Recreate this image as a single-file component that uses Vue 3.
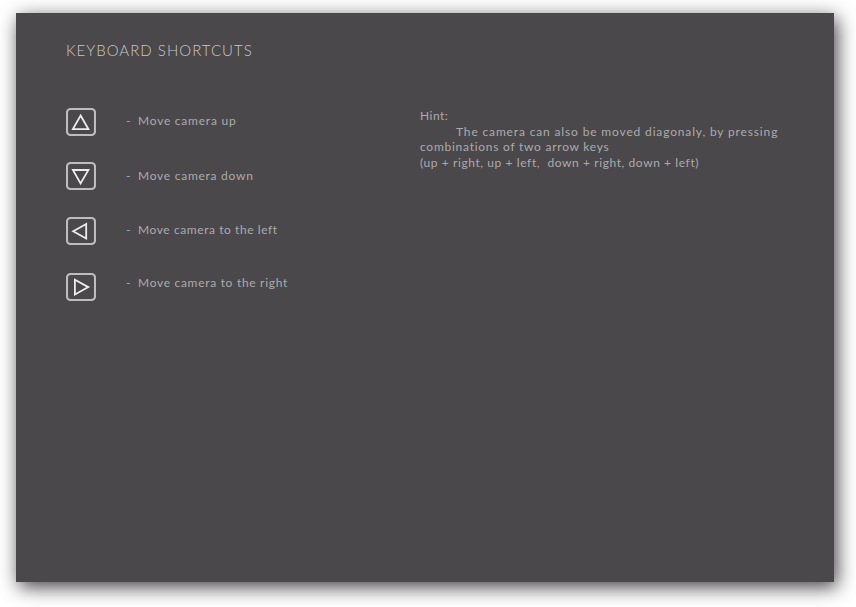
<script setup>
const shortcuts = [
  { id: 'up', label: 'Move camera up', points: '14.6,7.5 22.4,21.1 6.9,21.1' },
  { id: 'down', label: 'Move camera down', points: '14.6,21.4 22.4,8 6.9,8' },
  { id: 'left', label: 'Move camera to the left', points: '7.2,14.3 20.2,7 20.2,21.5' },
  { id: 'right', label: 'Move camera to the right', points: '22.3,14.1 8.9,6.7 8.9,21.5' },
]
</script>

<template>
  <div class="page">
    <main class="panel">
      <h1 class="title">KEYBOARD SHORTCUTS</h1>
      <div class="content">
        <ul class="shortcuts">
          <li v-for="s in shortcuts" :key="s.id" class="row" :class="s.id">
            <svg class="key" width="30" height="28" viewBox="0 0 30 28">
              <rect x="1" y="1" width="28" height="26" rx="3.5" fill="none" stroke="#bdbdbe" stroke-width="2.1" />
              <polygon :points="s.points" fill="none" stroke="#ececec" stroke-width="1.8" />
            </svg>
            <span class="dash">-</span>
            <span class="label">{{ s.label }}</span>
          </li>
        </ul>
        <section class="hint">
          <div class="l1">Hint:</div>
          <div class="l2">The camera can also be moved diagonaly, by pressing</div>
          <div class="l3">combinations of two arrow keys</div>
          <div class="l4">(up + right, up + left,&nbsp; down + right, down + left)</div>
        </section>
      </div>
    </main>
  </div>
</template>

<style>
body {
  background: #fff;
}
</style>

<style scoped>
.page {
  box-sizing: border-box;
  height: 607px;
  padding: 13px 0 0 16px;
  overflow: hidden;
}
.panel {
  box-sizing: border-box;
  width: 818px;
  height: 569px;
  padding: 27px 0 0 50px;
  background: #4a484a;
  box-shadow: 3px 5px 18px rgba(0, 0, 0, 0.75);
  color: #acabac;
  font-family: Lato, "Liberation Sans", sans-serif;
  font-size: 12px;
}
.title {
  margin: 0;
  height: 20px;
  color: #c8c7c8;
  font-size: 15px;
  font-weight: 300;
  line-height: 20px;
  letter-spacing: 1.02px;
  white-space: nowrap;
}
.content {
  display: flex;
  padding-top: 48px;
}
.shortcuts {
  width: 354px;
  margin: 0;
  padding: 0;
  list-style: none;
}
.row {
  display: flex;
  height: 28px;
  line-height: 26px;
  white-space: nowrap;
  letter-spacing: 0.77px;
}
.down {
  margin-top: 26px;
  line-height: 28px;
  letter-spacing: 0.74px;
}
.left {
  margin-top: 27px;
  letter-spacing: 0.58px;
}
.right {
  margin-top: 28px;
  line-height: 20px;
  letter-spacing: 0.7px;
}
.key { display: block; }
.dash {
  width: 12px;
  margin-left: 30px;
}
.hint {
  line-height: 15.6px;
  white-space: nowrap;
  letter-spacing: 0.8px;
}
.l1 { letter-spacing: 0.5px; }
.l2 {
  padding-left: 36px;
  letter-spacing: 0.85px;
}
.l3 { letter-spacing: 0.74px; }
.l4 { letter-spacing: 0.59px; }
</style>
